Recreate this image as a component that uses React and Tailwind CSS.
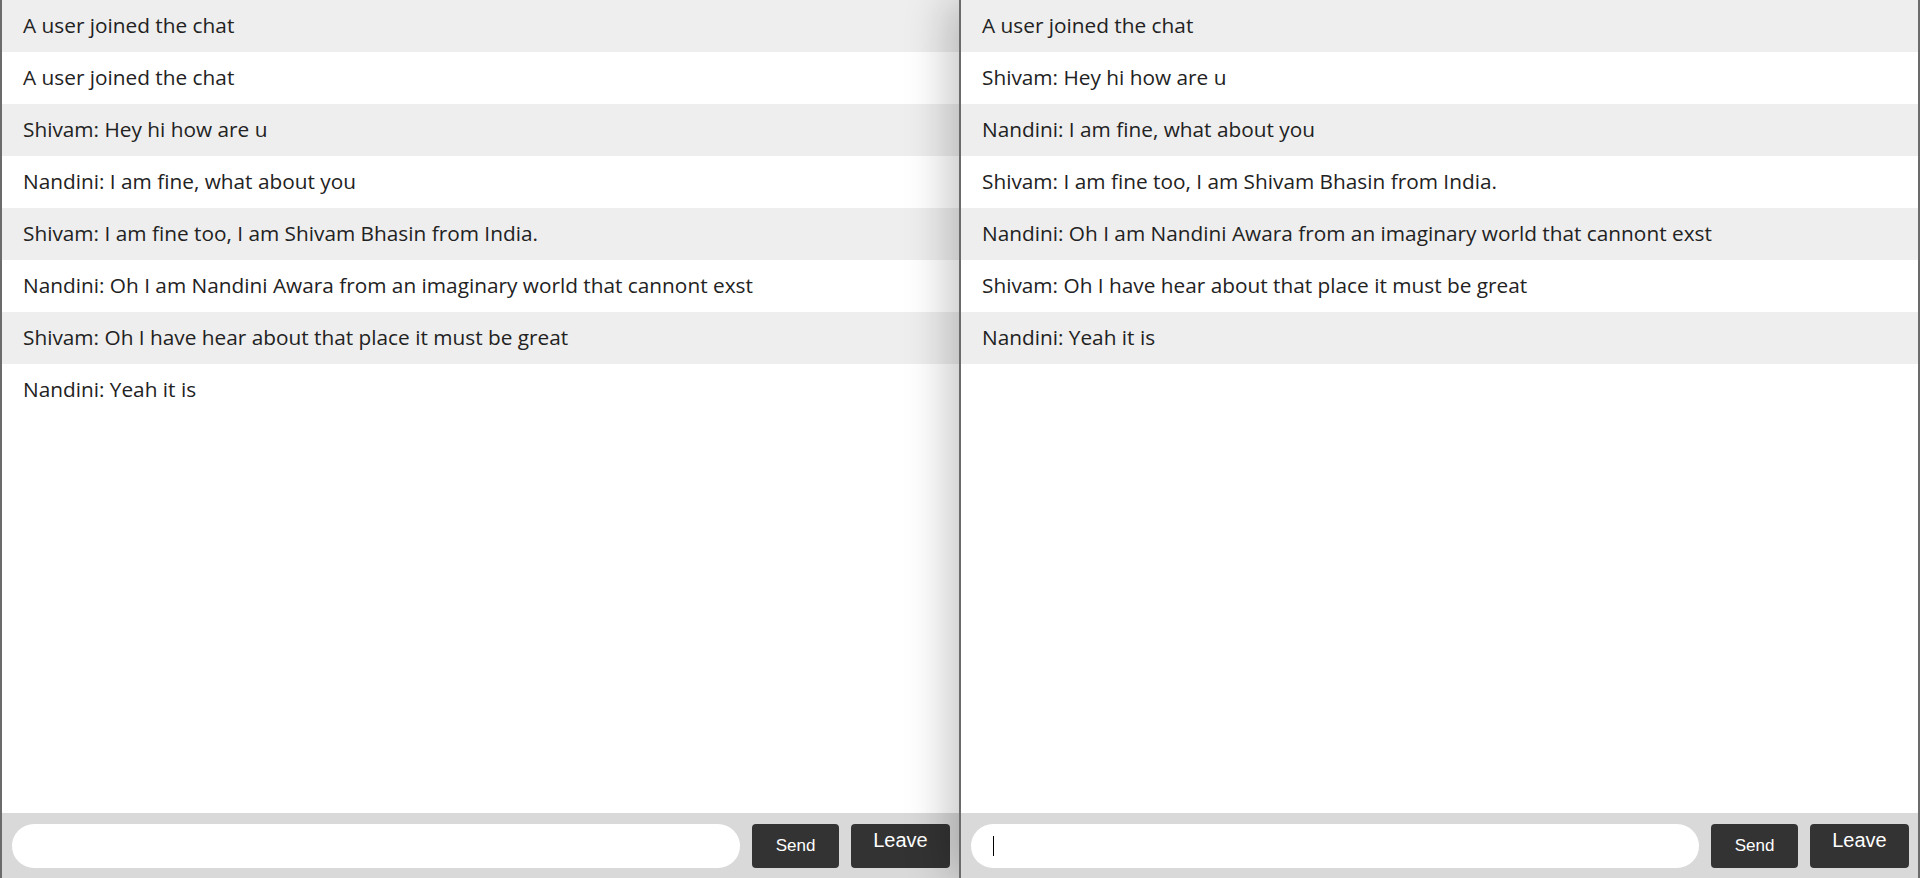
import { useState } from 'react';

const leftMessages = [
  'A user joined the chat',
  'A user joined the chat',
  'Shivam: Hey hi how are u',
  'Nandini: I am fine, what about you',
  'Shivam: I am fine too, I am Shivam Bhasin from India.',
  'Nandini: Oh I am Nandini Awara from an imaginary world that cannont exst',
  'Shivam: Oh I have hear about that place it must be great',
  'Nandini: Yeah it is',
];

const rightMessages = [
  'A user joined the chat',
  'Shivam: Hey hi how are u',
  'Nandini: I am fine, what about you',
  'Shivam: I am fine too, I am Shivam Bhasin from India.',
  'Nandini: Oh I am Nandini Awara from an imaginary world that cannont exst',
  'Shivam: Oh I have hear about that place it must be great',
  'Nandini: Yeah it is',
];

function ChatWindow({ messages, focused }) {
  const [text, setText] = useState('');

  return (
    <div className="flex h-full min-w-0 flex-1 flex-col">
      <ul className="flex-1 overflow-hidden">
        {messages.map((msg, i) => (
          <li
            key={i}
            className={`flex h-[52px] items-center px-[21px] text-[20.8px] text-[#222] ${
              i % 2 === 0 ? 'bg-[#eeeeee]' : 'bg-white'
            }`}
          >
            {msg}
          </li>
        ))}
      </ul>

      <form
        onSubmit={(e) => e.preventDefault()}
        className="flex h-[65px] items-center gap-[12px] bg-[#d9d9d9] pl-[10px] pr-[9px]"
      >
        <div className="flex h-[44px] flex-1 items-center rounded-full bg-white pl-[22px]">
          {focused && <span className="h-[20px] w-[1px] bg-black" />}
          <input
            value={text}
            onChange={(e) => setText(e.target.value)}
            className="h-full flex-1 bg-transparent outline-none"
          />
        </div>
        <button
          type="submit"
          className="h-[44px] w-[87px] rounded-[4px] bg-[#333333] font-['Liberation_Sans',sans-serif] text-[17px] leading-none text-white"
        >
          Send
        </button>
        <button
          type="button"
          className="flex h-[44px] w-[99px] items-start justify-center rounded-[4px] bg-[#333333] pt-[6px] font-['Liberation_Sans',sans-serif] text-[20px] leading-none text-white"
        >
          Leave
        </button>
      </form>
    </div>
  );
}

export default function App() {
  return (
    <div className="flex h-[878px] w-[1920px] overflow-hidden bg-white font-['Open_Sans',sans-serif]">
      <div className="flex h-full w-[959px] border-l-2 border-[#6b6b6b]">
        <ChatWindow messages={leftMessages} />
      </div>
      <div className="relative z-10 flex h-full flex-1 border-x-2 border-[#6b6b6b] shadow-[-12px_0_40px_rgba(0,0,0,0.22)]">
        <ChatWindow messages={rightMessages} focused />
      </div>
    </div>
  );
}
